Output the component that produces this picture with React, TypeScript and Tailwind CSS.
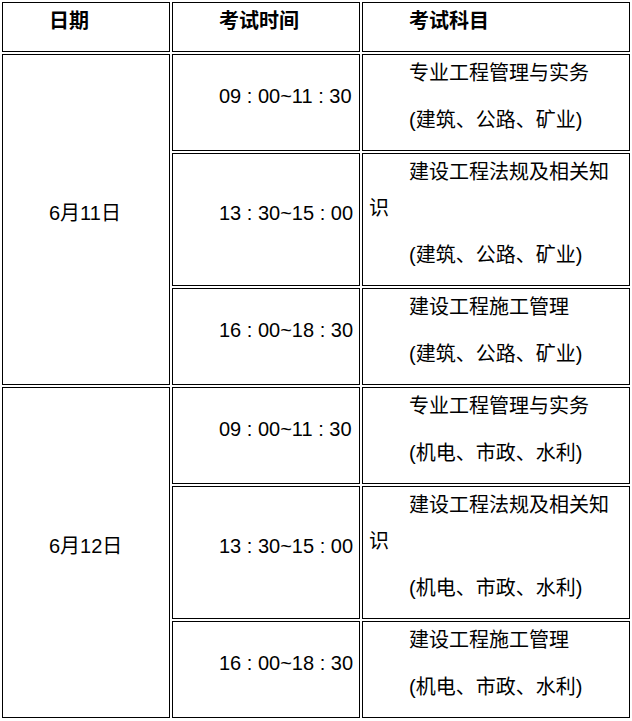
import React from "react";

const FONT = { fontFamily: '"Liberation Sans", "Noto Sans CJK SC", sans-serif' };

function P({ children, bold = false, nowrap = false }: { children: React.ReactNode; bold?: boolean; nowrap?: boolean }) {
  return (
    <p
      className={
        "indent-[2em] leading-[36px] mb-[11.5px] text-[20px] text-black " +
        (bold ? "font-bold " : "") +
        (nowrap ? "whitespace-nowrap" : "")
      }
    >
      {children}
    </p>
  );
}

type Row = { time: string; subject: string; scope: string };

const groups: { date: string; rows: Row[] }[] = [
  {
    date: "6月11日",
    rows: [
      { time: "09 : 00~11 : 30", subject: "专业工程管理与实务", scope: "(建筑、公路、矿业)" },
      { time: "13 : 30~15 : 00", subject: "建设工程法规及相关知识", scope: "(建筑、公路、矿业)" },
      { time: "16 : 00~18 : 30", subject: "建设工程施工管理", scope: "(建筑、公路、矿业)" },
    ],
  },
  {
    date: "6月12日",
    rows: [
      { time: "09 : 00~11 : 30", subject: "专业工程管理与实务", scope: "(机电、市政、水利)" },
      { time: "13 : 30~15 : 00", subject: "建设工程法规及相关知识", scope: "(机电、市政、水利)" },
      { time: "16 : 00~18 : 30", subject: "建设工程施工管理", scope: "(机电、市政、水利)" },
    ],
  },
];

const td = "border border-black pl-[6px] pr-2 py-0 align-middle text-left";

export default function App() {
  return (
    <div className="w-[632px] bg-white" style={FONT}>
      <table className="w-[632px] table-fixed border-separate border-spacing-[2px]">
        <thead>
          <tr>
            <th className={td + " w-[168px]"}>
              <P bold>日期</P>
            </th>
            <th className={td + " w-[188px]"}>
              <P bold>考试时间</P>
            </th>
            <th className={td + " w-[268px]"}>
              <P bold>考试科目</P>
            </th>
          </tr>
        </thead>
        <tbody>
          {groups.map((g) =>
            g.rows.map((r, i) => (
              <tr key={g.date + i}>
                {i === 0 && (
                  <td className={td} rowSpan={3}>
                    <P>{g.date}</P>
                  </td>
                )}
                <td className={td}>
                  <P nowrap>{r.time}</P>
                </td>
                <td className={td}>
                  <P>{r.subject}</P>
                  <P>{r.scope}</P>
                </td>
              </tr>
            ))
          )}
        </tbody>
      </table>
    </div>
  );
}
